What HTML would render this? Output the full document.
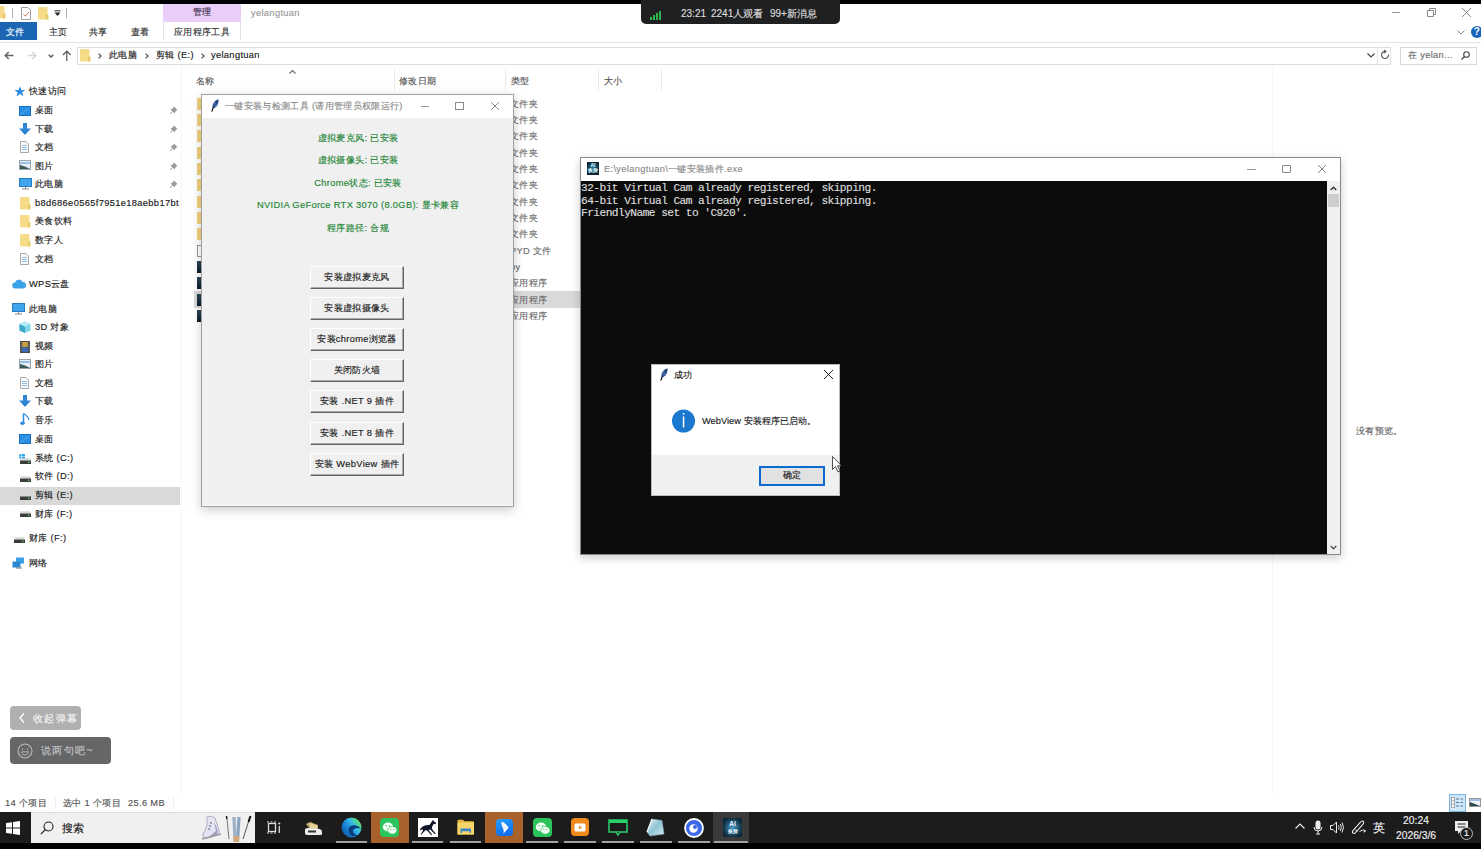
<!DOCTYPE html>
<html><head><meta charset="utf-8">
<style>
*{margin:0;padding:0;box-sizing:border-box}
html,body{width:1481px;height:849px;overflow:hidden;background:#fff;font-family:"Liberation Sans",sans-serif;font-size:9.3px;letter-spacing:0.33px;color:#1a1a1a}
.a{position:absolute}
.t{position:absolute;white-space:nowrap;line-height:12px;-webkit-text-stroke:0.15px currentColor}
svg{position:absolute;overflow:visible}
</style></head><body>

<div class="a" style="left:0px;top:0px;width:1481px;height:4px;background:#000"></div>
<svg style="left:-5px;top:6px" width="11" height="13"><rect x="0" y="0" width="9.5" height="12.5" rx="1" fill="#f6dc88"/><path d="M8 7.5H10.5V12.5H8Z" fill="#e8c868"/></svg>
<div class="a" style="left:12px;top:8px;width:1px;height:10px;background:#b0b0b0"></div>
<svg style="left:21px;top:7px" width="10" height="13"><path d="M0.5 0.5H7L9.5 3V12.5H0.5Z" fill="#fff" stroke="#a0a0a0"/><path d="M2.3 7.2L4.2 9L8 5" fill="none" stroke="#d2704a" stroke-width="1"/></svg>
<svg style="left:38px;top:7px" width="11" height="13"><rect x="0" y="0" width="9.5" height="12.5" rx="1" fill="#f6dc88"/><path d="M8 7.5H10.5V12.5H8Z" fill="#e8c868"/></svg>
<svg style="left:54px;top:10px" width="7" height="7"><path d="M0.5 0.8H6.5" stroke="#222" stroke-width="1"/><path d="M0.5 2.5L3.5 6L6.5 2.5Z" fill="#222"/></svg>
<div class="a" style="left:66px;top:8px;width:1px;height:10px;background:#b0b0b0"></div>
<div class="a" style="left:163px;top:4px;width:78px;height:18px;background:#e8cef8"></div>
<div class="t" style="left:163px;top:6px;color:#3a2a48;width:78px;text-align:center">管理</div>
<div class="t" style="left:251px;top:7px;color:#9a9a9a;">yelangtuan</div>
<div class="a" style="left:1392px;top:12px;width:8px;height:1px;background:#999"></div>
<svg style="left:1427px;top:8px" width="9" height="9"><path d="M0.5 2.5H6.5V8.5H0.5Z M2.5 2.5V0.5H8.5V6.5H6.5" fill="none" stroke="#8a8a8a"/></svg>
<svg style="left:1462px;top:8px" width="9" height="9"><path d="M0 0L9 9M9 0L0 9" stroke="#777" stroke-width="0.9"/></svg>
<div class="a" style="left:0px;top:22px;width:37px;height:18px;background:#1a66b3"></div>
<div class="t" style="left:6px;top:26px;color:#fff;">文件</div>
<div class="t" style="left:49px;top:26px;color:#333;">主页</div>
<div class="t" style="left:89px;top:26px;color:#333;">共享</div>
<div class="t" style="left:131px;top:26px;color:#333;">查看</div>
<div class="a" style="left:163px;top:22px;width:78px;height:18px;border-left:1px solid #e2e2e2;border-right:1px solid #e2e2e2"></div>
<div class="t" style="left:163px;top:26px;color:#333;width:78px;text-align:center">应用程序工具</div>
<svg style="left:1457px;top:30px" width="8" height="5"><path d="M0.5 0.5L4 4L7.5 0.5" fill="none" stroke="#888"/></svg>
<div class="a" style="left:1471px;top:26px;width:12px;height:12px;border-radius:50%;background:#1565b8;color:#fff;font-weight:bold;font-size:10px;line-height:12px;text-align:center">?</div>
<div class="a" style="left:0px;top:42px;width:1481px;height:1px;background:#e3e3e3"></div>
<svg style="left:4px;top:51px" width="10" height="9"><path d="M9.5 4.5H1.5M4.8 1L1.2 4.5L4.8 8" fill="none" stroke="#666" stroke-width="1.5"/></svg>
<svg style="left:27px;top:51px" width="10" height="9"><path d="M0.5 4.5H8.5M5.2 1L8.8 4.5L5.2 8" fill="none" stroke="#d4d4d4" stroke-width="1.4"/></svg>
<svg style="left:48px;top:54px" width="6" height="4"><path d="M0.7 0.7L3 3L5.3 0.7" fill="none" stroke="#555" stroke-width="1.3"/></svg>
<svg style="left:62px;top:50px" width="10" height="11"><path d="M4.8 11V1.5M1 5L4.8 1.2L8.6 5" fill="none" stroke="#555" stroke-width="1.2"/></svg>
<div class="a" style="left:77px;top:47px;width:1314px;height:18px;border:1px solid #dedede"></div>
<div class="a" style="left:1377px;top:47px;width:1px;height:18px;background:#e3e3e3"></div>
<svg style="left:80px;top:49px" width="11" height="13"><rect x="0" y="0" width="9.5" height="12.5" rx="1" fill="#f6dc88"/><path d="M8 7.5H10.5V12.5H8Z" fill="#e8c868"/></svg>
<svg style="left:98px;top:53px" width="4" height="6"><path d="M0.6 0.6L3 3L0.6 5.4" fill="none" stroke="#555" stroke-width="1.3"/></svg>
<div class="t" style="left:109px;top:49px;color:#1a1a1a;">此电脑</div>
<svg style="left:145px;top:53px" width="4" height="6"><path d="M0.6 0.6L3 3L0.6 5.4" fill="none" stroke="#555" stroke-width="1.3"/></svg>
<div class="t" style="left:156px;top:49px;color:#1a1a1a;">剪辑 (E:)</div>
<svg style="left:201px;top:53px" width="4" height="6"><path d="M0.6 0.6L3 3L0.6 5.4" fill="none" stroke="#555" stroke-width="1.3"/></svg>
<div class="t" style="left:211px;top:49px;color:#1a1a1a;">yelangtuan</div>
<svg style="left:1367px;top:53px" width="8" height="5"><path d="M0.5 0.5L4 4L7.5 0.5" fill="none" stroke="#444" stroke-width="1.2"/></svg>
<svg style="left:1381px;top:50px" width="9" height="10"><path d="M7.5 4.5A3.5 3.5 0 1 1 4.5 1.5M3 0L5 1.5L3 3.2" fill="none" stroke="#555" stroke-width="1.1"/></svg>
<div class="a" style="left:1400px;top:47px;width:77px;height:18px;border:1px solid #d9d9d9"></div>
<div class="t" style="left:1408px;top:49px;color:#6d6d6d;">在 yelan...</div>
<svg style="left:1461px;top:51px" width="9" height="10"><circle cx="5.5" cy="3.5" r="2.8" fill="none" stroke="#444" stroke-width="1.1"/><path d="M3.5 5.5L0.5 8.5" stroke="#444" stroke-width="1.3"/></svg>
<svg style="left:14px;top:86px" width="11" height="11"><path d="M6 0.5L7.5 4H11L8.2 6.3L9.3 10.3L6 8L2.5 10.5L3.5 6.5L0.5 4H4.3Z" fill="#2f8be0"/></svg>
<div class="t" style="left:29px;top:85px;color:#1a1a1a;">快速访问</div>
<svg style="left:19px;top:106px" width="12" height="10"><rect x="0.5" y="0.5" width="11" height="9" fill="#2b8fe6" stroke="#1a6cc0"/><path d="M1 9L11 1" stroke="#5ab0f4" stroke-width="0.6"/></svg>
<div class="t" style="left:35px;top:104px;color:#1a1a1a;">桌面</div>
<svg style="left:170px;top:106px" width="8" height="8"><path d="M4 0.5L7.5 4L6.5 4.5L5 6L4.5 7.5L0.5 3.5L2 3L3.5 1.5Z" fill="#9a9a9a"/><path d="M2.5 5.5L0.2 7.8" stroke="#9a9a9a"/></svg>
<svg style="left:19px;top:123px" width="12" height="12"><path d="M4 0H8V5.5H12L6 12L0 5.5H4Z" fill="#2f86d6"/></svg>
<div class="t" style="left:35px;top:122.69999999999999px;color:#1a1a1a;">下载</div>
<svg style="left:170px;top:124.69999999999999px" width="8" height="8"><path d="M4 0.5L7.5 4L6.5 4.5L5 6L4.5 7.5L0.5 3.5L2 3L3.5 1.5Z" fill="#9a9a9a"/><path d="M2.5 5.5L0.2 7.8" stroke="#9a9a9a"/></svg>
<svg style="left:20px;top:141px" width="9" height="12"><path d="M0.5 0.5H6L8.5 3V11.5H0.5Z" fill="#fafafa" stroke="#a8a8a8"/><path d="M2 4.5H7M2 6.5H7M2 8.5H7" stroke="#8cbce8" stroke-width="1"/></svg>
<div class="t" style="left:35px;top:141px;color:#1a1a1a;">文档</div>
<svg style="left:170px;top:143px" width="8" height="8"><path d="M4 0.5L7.5 4L6.5 4.5L5 6L4.5 7.5L0.5 3.5L2 3L3.5 1.5Z" fill="#9a9a9a"/><path d="M2.5 5.5L0.2 7.8" stroke="#9a9a9a"/></svg>
<svg style="left:19px;top:160px" width="12" height="10"><rect x="0.5" y="0.5" width="11" height="9" fill="#e8eef4" stroke="#9aa4ae"/><path d="M1 3H11" stroke="#7fb0e0" stroke-width="1.5"/><path d="M1 9L1 5Q6 6 11 9Z" fill="#3a5a5a"/></svg>
<div class="t" style="left:35px;top:159.6px;color:#1a1a1a;">图片</div>
<svg style="left:170px;top:161.6px" width="8" height="8"><path d="M4 0.5L7.5 4L6.5 4.5L5 6L4.5 7.5L0.5 3.5L2 3L3.5 1.5Z" fill="#9a9a9a"/><path d="M2.5 5.5L0.2 7.8" stroke="#9a9a9a"/></svg>
<svg style="left:19px;top:178px" width="13" height="12"><rect x="0.5" y="0.5" width="12" height="8" fill="#3fa6ee" stroke="#2a7cc0"/><path d="M3 11H10" stroke="#888" stroke-width="1"/><path d="M6.5 9V11" stroke="#888"/></svg>
<div class="t" style="left:35px;top:178px;color:#1a1a1a;">此电脑</div>
<svg style="left:170px;top:180px" width="8" height="8"><path d="M4 0.5L7.5 4L6.5 4.5L5 6L4.5 7.5L0.5 3.5L2 3L3.5 1.5Z" fill="#9a9a9a"/><path d="M2.5 5.5L0.2 7.8" stroke="#9a9a9a"/></svg>
<svg style="left:20px;top:197px" width="11" height="13"><rect x="0" y="0" width="9.5" height="12.5" rx="1" fill="#f6dc88"/><path d="M8 7.5H10.5V12.5H8Z" fill="#e8c868"/></svg>
<div class="t" style="left:35px;top:197px;color:#1a1a1a;letter-spacing:0.35px;width:145px;overflow:hidden">b8d686e0565f7951e18aebb17bt</div>
<svg style="left:20px;top:215px" width="11" height="13"><rect x="0" y="0" width="9.5" height="12.5" rx="1" fill="#f6dc88"/><path d="M8 7.5H10.5V12.5H8Z" fill="#e8c868"/></svg>
<div class="t" style="left:35px;top:215px;color:#1a1a1a;">美食饮料</div>
<svg style="left:20px;top:234px" width="11" height="13"><rect x="0" y="0" width="9.5" height="12.5" rx="1" fill="#f6dc88"/><path d="M8 7.5H10.5V12.5H8Z" fill="#e8c868"/></svg>
<div class="t" style="left:35px;top:234px;color:#1a1a1a;">数字人</div>
<svg style="left:20px;top:253px" width="9" height="12"><path d="M0.5 0.5H6L8.5 3V11.5H0.5Z" fill="#fafafa" stroke="#a8a8a8"/><path d="M2 4.5H7M2 6.5H7M2 8.5H7" stroke="#8cbce8" stroke-width="1"/></svg>
<div class="t" style="left:35px;top:253px;color:#1a1a1a;">文档</div>
<svg style="left:12px;top:279px" width="14" height="10"><path d="M3.5 9.5A3 3 0 0 1 3 3.5A4 4 0 0 1 10.5 3A3 3 0 0 1 11 9.5Z" fill="#3aa0e8"/></svg>
<div class="t" style="left:29px;top:278px;color:#1a1a1a;">WPS云盘</div>
<svg style="left:12px;top:303px" width="13" height="12"><rect x="0.5" y="0.5" width="12" height="8" fill="#3fa6ee" stroke="#2a7cc0"/><path d="M3 11H10" stroke="#888" stroke-width="1"/><path d="M6.5 9V11" stroke="#888"/></svg>
<div class="t" style="left:29px;top:303px;color:#1a1a1a;">此电脑</div>
<svg style="left:19px;top:321px" width="12" height="12"><path d="M6 0.5L11.5 3V9.5L6 12L0.5 9.5V3Z" fill="#7fd4e8"/><path d="M6 5.5V12L0.5 9.5V3Z" fill="#3aa8c8"/><path d="M6 5.5L11.5 3L6 0.5L0.5 3Z" fill="#b8ecf8"/></svg>
<div class="t" style="left:35px;top:321px;color:#1a1a1a;">3D 对象</div>
<svg style="left:20px;top:341px" width="10" height="12"><rect x="0" y="0" width="10" height="12" fill="#4a4a4a"/><path d="M1 1V11M9 1V11" stroke="#999" stroke-width="0.8" stroke-dasharray="1 1"/><rect x="2.2" y="1" width="5.6" height="5" fill="#c8a040"/><rect x="2.2" y="6.3" width="5.6" height="4.7" fill="#3a6ab8"/></svg>
<div class="t" style="left:35px;top:340px;color:#1a1a1a;">视频</div>
<svg style="left:19px;top:359px" width="12" height="10"><rect x="0.5" y="0.5" width="11" height="9" fill="#e8eef4" stroke="#9aa4ae"/><path d="M1 3H11" stroke="#7fb0e0" stroke-width="1.5"/><path d="M1 9L1 5Q6 6 11 9Z" fill="#3a5a5a"/></svg>
<div class="t" style="left:35px;top:358px;color:#1a1a1a;">图片</div>
<svg style="left:20px;top:377px" width="9" height="12"><path d="M0.5 0.5H6L8.5 3V11.5H0.5Z" fill="#fafafa" stroke="#a8a8a8"/><path d="M2 4.5H7M2 6.5H7M2 8.5H7" stroke="#8cbce8" stroke-width="1"/></svg>
<div class="t" style="left:35px;top:377px;color:#1a1a1a;">文档</div>
<svg style="left:19px;top:395px" width="12" height="12"><path d="M4 0H8V5.5H12L6 12L0 5.5H4Z" fill="#2f86d6"/></svg>
<div class="t" style="left:35px;top:395px;color:#1a1a1a;">下载</div>
<svg style="left:20px;top:413px" width="10" height="13"><path d="M3.5 0.5V10" stroke="#2f8be0" stroke-width="1.5"/><ellipse cx="2.5" cy="10.2" rx="2.3" ry="1.8" fill="#2f8be0"/><path d="M3.5 0.5Q8 3 9 7" fill="none" stroke="#2f8be0" stroke-width="1.2"/></svg>
<div class="t" style="left:35px;top:414px;color:#1a1a1a;">音乐</div>
<svg style="left:19px;top:434px" width="12" height="10"><rect x="0.5" y="0.5" width="11" height="9" fill="#2b8fe6" stroke="#1a6cc0"/><path d="M1 9L11 1" stroke="#5ab0f4" stroke-width="0.6"/></svg>
<div class="t" style="left:35px;top:433px;color:#1a1a1a;">桌面</div>
<div class="a" style="left:0px;top:487px;width:180px;height:18px;background:#d9d9d9"></div>
<svg style="left:19px;top:454px" width="6" height="5"><path d="M0 0.5L2.5 0.2V2.2H0ZM3 0.1L6 0V2.2H3ZM0 2.7H2.5V4.6L0 4.3ZM3 2.7H6V5L3 4.7Z" fill="#2aa8f0"/></svg>
<svg style="left:20px;top:458px" width="11" height="6"><path d="M1 0.3H10L11 2.5H0Z" fill="#d8d8d8"/><rect x="0" y="2.5" width="11" height="3.5" fill="#3c3c3c"/><rect x="8" y="3.6" width="1.5" height="1.3" fill="#5ad25a"/></svg>
<div class="t" style="left:35px;top:452px;color:#1a1a1a;">系统 (C:)</div>
<svg style="left:20px;top:476px" width="11" height="6"><path d="M1 0.3H10L11 2.5H0Z" fill="#d8d8d8"/><rect x="0" y="2.5" width="11" height="3.5" fill="#3c3c3c"/><rect x="8" y="3.6" width="1.5" height="1.3" fill="#5ad25a"/></svg>
<div class="t" style="left:35px;top:470px;color:#1a1a1a;">软件 (D:)</div>
<svg style="left:20px;top:494px" width="11" height="6"><path d="M1 0.3H10L11 2.5H0Z" fill="#d8d8d8"/><rect x="0" y="2.5" width="11" height="3.5" fill="#3c3c3c"/><rect x="8" y="3.6" width="1.5" height="1.3" fill="#5ad25a"/></svg>
<div class="t" style="left:35px;top:489px;color:#1a1a1a;">剪辑 (E:)</div>
<svg style="left:20px;top:511px" width="11" height="6"><path d="M1 0.3H10L11 2.5H0Z" fill="#d8d8d8"/><rect x="0" y="2.5" width="11" height="3.5" fill="#3c3c3c"/><rect x="8" y="3.6" width="1.5" height="1.3" fill="#5ad25a"/></svg>
<div class="t" style="left:35px;top:508px;color:#1a1a1a;">财库 (F:)</div>
<svg style="left:14px;top:537px" width="11" height="6"><path d="M1 0.3H10L11 2.5H0Z" fill="#d8d8d8"/><rect x="0" y="2.5" width="11" height="3.5" fill="#3c3c3c"/><rect x="8" y="3.6" width="1.5" height="1.3" fill="#5ad25a"/></svg>
<div class="t" style="left:29px;top:532px;color:#1a1a1a;">财库 (F:)</div>
<svg style="left:12px;top:557px" width="13" height="12"><rect x="4" y="0.5" width="8" height="6" fill="#3aa0e8"/><rect x="0.5" y="4.5" width="8" height="6" fill="#2a88d0"/><path d="M4 11H10" stroke="#777"/></svg>
<div class="t" style="left:29px;top:557px;color:#1a1a1a;">网络</div>
<div class="a" style="left:181px;top:66px;width:1px;height:728px;background:#f5f5f5"></div>
<div class="a" style="left:1272px;top:66px;width:1px;height:728px;background:#f8f8f8"></div>
<div class="t" style="left:196px;top:75px;color:#555;">名称</div>
<svg style="left:289px;top:70px" width="7" height="4"><path d="M0.5 3.5L3.5 0.5L6.5 3.5" fill="none" stroke="#666" stroke-width="1.1"/></svg>
<div class="a" style="left:394px;top:70px;width:1px;height:20px;background:#e8e8e8"></div>
<div class="a" style="left:505px;top:70px;width:1px;height:20px;background:#e8e8e8"></div>
<div class="a" style="left:598px;top:70px;width:1px;height:20px;background:#e8e8e8"></div>
<div class="a" style="left:661px;top:70px;width:1px;height:20px;background:#e8e8e8"></div>
<div class="t" style="left:399px;top:75px;color:#555;">修改日期</div>
<div class="t" style="left:511px;top:75px;color:#555;">类型</div>
<div class="t" style="left:604px;top:75px;color:#555;">大小</div>
<div class="a" style="left:194px;top:291px;width:386px;height:17px;background:#d9d9d9"></div>
<div class="a" style="left:197px;top:98px;width:5px;height:12px;background:#f2d27a"></div>
<div class="t" style="left:510px;top:98px;color:#6d6d6d;">文件夹</div>
<div class="a" style="left:197px;top:114px;width:5px;height:12px;background:#f2d27a"></div>
<div class="t" style="left:510px;top:114px;color:#6d6d6d;">文件夹</div>
<div class="a" style="left:197px;top:130px;width:5px;height:12px;background:#f2d27a"></div>
<div class="t" style="left:510px;top:130px;color:#6d6d6d;">文件夹</div>
<div class="a" style="left:197px;top:147px;width:5px;height:12px;background:#f2d27a"></div>
<div class="t" style="left:510px;top:147px;color:#6d6d6d;">文件夹</div>
<div class="a" style="left:197px;top:163px;width:5px;height:12px;background:#f2d27a"></div>
<div class="t" style="left:510px;top:163px;color:#6d6d6d;">文件夹</div>
<div class="a" style="left:197px;top:179px;width:5px;height:12px;background:#f2d27a"></div>
<div class="t" style="left:510px;top:179px;color:#6d6d6d;">文件夹</div>
<div class="a" style="left:197px;top:196px;width:5px;height:12px;background:#f2d27a"></div>
<div class="t" style="left:510px;top:196px;color:#6d6d6d;">文件夹</div>
<div class="a" style="left:197px;top:212px;width:5px;height:12px;background:#f2d27a"></div>
<div class="t" style="left:510px;top:212px;color:#6d6d6d;">文件夹</div>
<div class="a" style="left:197px;top:228px;width:5px;height:12px;background:#f2d27a"></div>
<div class="t" style="left:510px;top:228px;color:#6d6d6d;">文件夹</div>
<div class="a" style="left:197px;top:245px;width:5px;height:12px;background:#fff;border:1px solid #999"></div>
<div class="t" style="left:510px;top:245px;color:#6d6d6d;">PYD 文件</div>
<div class="a" style="left:197px;top:261px;width:5px;height:12px;background:linear-gradient(#2a4a5a,#0e1a24)"></div>
<div class="t" style="left:510px;top:261px;color:#6d6d6d;">py</div>
<div class="a" style="left:197px;top:277px;width:5px;height:12px;background:linear-gradient(#2a4a5a,#0e1a24)"></div>
<div class="t" style="left:510px;top:277px;color:#6d6d6d;">应用程序</div>
<div class="a" style="left:197px;top:294px;width:5px;height:12px;background:linear-gradient(#2a4a5a,#0e1a24)"></div>
<div class="t" style="left:510px;top:294px;color:#6d6d6d;">应用程序</div>
<div class="a" style="left:197px;top:310px;width:5px;height:12px;background:linear-gradient(#2a4a5a,#0e1a24)"></div>
<div class="t" style="left:510px;top:310px;color:#6d6d6d;">应用程序</div>
<div class="t" style="left:1356px;top:425px;color:#666;">没有预览。</div>
<div class="t" style="left:5px;top:797px;color:#555;">14 个项目</div>
<div class="a" style="left:55px;top:797px;width:1px;height:12px;background:#eee"></div>
<div class="t" style="left:63px;top:797px;color:#555;">选中 1 个项目</div>
<div class="t" style="left:128px;top:797px;color:#555;">25.6 MB</div>
<div class="a" style="left:173px;top:797px;width:1px;height:12px;background:#eee"></div>
<div class="a" style="left:1449px;top:794px;width:17px;height:18px;background:#cce8ff;border:1px solid #7fb4d8"></div>
<svg style="left:1451px;top:797px" width="13" height="11"><rect x="0.5" y="0.5" width="3" height="10" fill="#fff" stroke="#888" stroke-width="0.7"/><path d="M0.5 3.8H3.5M0.5 7.2H3.5" stroke="#888" stroke-width="0.7"/><path d="M5 2H8M9.5 2H12M5 5.5H8M9.5 5.5H12M5 9H8M9.5 9H12" stroke="#6a7480" stroke-width="1.2"/></svg>
<svg style="left:1469px;top:798px" width="12" height="9"><rect x="0.5" y="0.5" width="11" height="8" fill="#eef4fa" stroke="#999"/><path d="M1 2H11" stroke="#5a8ad0"/><path d="M1 8V4Q6 6 11 8Z" fill="#2a4a4a"/></svg>
<div class="a" style="left:201px;top:94px;width:313px;height:413px;background:#f0f0f0;border:1px solid #a0a0a0;box-shadow:inset 0 -1px 0 #fff,0 3px 10px rgba(0,0,0,0.2)"></div>
<div class="a" style="left:202px;top:95px;width:311px;height:23px;background:#fff"></div>
<svg style="left:211px;top:99px" width="8" height="13"><path d="M7.5 0.3C4 1 1.3 4.5 1.3 8.6L2.4 9.6C5.8 8.2 8 4.6 7.5 0.3Z" fill="#34589a"/><path d="M6.8 1.2L2 9" stroke="#0c1a3a" stroke-width="0.7"/><path d="M3 5L5 4.5M2.5 7L5.5 6.2" stroke="#8ab0e8" stroke-width="0.5"/><path d="M2 9L0.8 12.6" stroke="#000" stroke-width="1.1"/></svg>
<div class="t" style="left:225px;top:100px;color:#8c8c8c;">一键安装与检测工具 (请用管理员权限运行)</div>
<div class="a" style="left:421px;top:106px;width:8px;height:1px;background:#999"></div>
<div class="a" style="left:455px;top:102px;width:9px;height:8px;border:1px solid #8a8a8a"></div>
<svg style="left:491px;top:102px" width="8" height="8"><path d="M0 0L8 8M8 0L0 8" stroke="#808080" stroke-width="0.9"/></svg>
<div class="t" style="left:202px;top:132px;color:#228534;width:311px;text-align:center;padding-left:1px">虚拟麦克风: 已安装</div>
<div class="t" style="left:202px;top:154px;color:#228534;width:311px;text-align:center;padding-left:1px">虚拟摄像头: 已安装</div>
<div class="t" style="left:202px;top:177px;color:#228534;width:311px;text-align:center;padding-left:1px">Chrome状态: 已安装</div>
<div class="t" style="left:202px;top:199px;color:#228534;width:311px;text-align:center;padding-left:1px">NVIDIA GeForce RTX 3070 (8.0GB): 显卡兼容</div>
<div class="t" style="left:202px;top:222px;color:#228534;width:311px;text-align:center;padding-left:1px">程序路径: 合规</div>
<div class="a" style="left:310px;top:266px;width:94px;height:23px;background:#f0f0f0;border-top:1px solid #fff;border-left:1px solid #fff;border-right:1px solid #646464;border-bottom:1px solid #646464;box-shadow:inset -1px -1px 0 #a8a8a8"></div>
<div class="t" style="left:310px;top:271px;color:#1a1a1a;width:94px;text-align:center">安装虚拟麦克风</div>
<div class="a" style="left:310px;top:297px;width:94px;height:23px;background:#f0f0f0;border-top:1px solid #fff;border-left:1px solid #fff;border-right:1px solid #646464;border-bottom:1px solid #646464;box-shadow:inset -1px -1px 0 #a8a8a8"></div>
<div class="t" style="left:310px;top:302px;color:#1a1a1a;width:94px;text-align:center">安装虚拟摄像头</div>
<div class="a" style="left:310px;top:328px;width:94px;height:23px;background:#f0f0f0;border-top:1px solid #fff;border-left:1px solid #fff;border-right:1px solid #646464;border-bottom:1px solid #646464;box-shadow:inset -1px -1px 0 #a8a8a8"></div>
<div class="t" style="left:310px;top:333px;color:#1a1a1a;width:94px;text-align:center">安装chrome浏览器</div>
<div class="a" style="left:310px;top:359px;width:94px;height:23px;background:#f0f0f0;border-top:1px solid #fff;border-left:1px solid #fff;border-right:1px solid #646464;border-bottom:1px solid #646464;box-shadow:inset -1px -1px 0 #a8a8a8"></div>
<div class="t" style="left:310px;top:364px;color:#1a1a1a;width:94px;text-align:center">关闭防火墙</div>
<div class="a" style="left:310px;top:390px;width:94px;height:23px;background:#f0f0f0;border-top:1px solid #fff;border-left:1px solid #fff;border-right:1px solid #646464;border-bottom:1px solid #646464;box-shadow:inset -1px -1px 0 #a8a8a8"></div>
<div class="t" style="left:310px;top:395px;color:#1a1a1a;width:94px;text-align:center">安装 .NET 9 插件</div>
<div class="a" style="left:310px;top:422px;width:94px;height:23px;background:#f0f0f0;border-top:1px solid #fff;border-left:1px solid #fff;border-right:1px solid #646464;border-bottom:1px solid #646464;box-shadow:inset -1px -1px 0 #a8a8a8"></div>
<div class="t" style="left:310px;top:427px;color:#1a1a1a;width:94px;text-align:center">安装 .NET 8 插件</div>
<div class="a" style="left:310px;top:453px;width:94px;height:23px;background:#f0f0f0;border-top:1px solid #fff;border-left:1px solid #fff;border-right:1px solid #646464;border-bottom:1px solid #646464;box-shadow:inset -1px -1px 0 #a8a8a8"></div>
<div class="t" style="left:310px;top:458px;color:#1a1a1a;width:94px;text-align:center">安装 WebView 插件</div>
<div class="a" style="left:580px;top:157px;width:761px;height:398px;background:#fff;border:1px solid #8a8a8a;box-shadow:0 3px 9px rgba(0,0,0,0.2)"></div>
<div class="a" style="left:587px;top:162px;width:12px;height:13px;background:radial-gradient(circle at 50% 45%,#2a7aa0,#0a2030 75%)"></div>
<div class="t" style="left:587px;top:163px;width:12px;text-align:center;color:#dff;font-size:5px;font-weight:bold;line-height:5px;letter-spacing:0;-webkit-text-stroke:0">AI<br>换脸</div>
<div class="t" style="left:604px;top:163px;color:#8c8c8c;">E:\yelangtuan\一键安装插件.exe</div>
<div class="a" style="left:1247px;top:169px;width:9px;height:1px;background:#999"></div>
<div class="a" style="left:1282px;top:165px;width:9px;height:8px;border:1px solid #888;border-radius:1px"></div>
<svg style="left:1318px;top:165px" width="8" height="8"><path d="M0 0L8 8M8 0L0 8" stroke="#777" stroke-width="0.9"/></svg>
<div class="a" style="left:581px;top:181px;width:746px;height:373px;background:#0c0c0c"></div>
<div class="a" style="left:1327px;top:181px;width:13px;height:373px;background:#f0f0f0"></div>
<div class="a" style="left:1328px;top:194px;width:11px;height:13px;background:#cdcdcd"></div>
<svg style="left:1330px;top:186px" width="7" height="5"><path d="M0.7 4L3.5 1.2L6.3 4" fill="none" stroke="#333" stroke-width="1.4"/></svg>
<svg style="left:1330px;top:545px" width="7" height="5"><path d="M0.7 1L3.5 3.8L6.3 1" fill="none" stroke="#555" stroke-width="1.4"/></svg>
<div class="t" style="left:581px;top:182.0px;color:#dedede;font-family:'Liberation Mono',monospace;font-size:11.2px;line-height:12.5px;letter-spacing:-0.55px">32-bit Virtual Cam already registered, skipping.</div>
<div class="t" style="left:581px;top:194.5px;color:#dedede;font-family:'Liberation Mono',monospace;font-size:11.2px;line-height:12.5px;letter-spacing:-0.55px">64-bit Virtual Cam already registered, skipping.</div>
<div class="t" style="left:581px;top:207.0px;color:#dedede;font-family:'Liberation Mono',monospace;font-size:11.2px;line-height:12.5px;letter-spacing:-0.55px">FriendlyName set to 'C920'.</div>
<div class="a" style="left:651px;top:364px;width:189px;height:132px;background:#fff;border:1px solid #bbb"></div>
<div class="a" style="left:652px;top:455px;width:187px;height:40px;background:#f0f0f0"></div>
<svg style="left:660px;top:368px" width="8" height="13"><path d="M7.5 0.3C4 1 1.3 4.5 1.3 8.6L2.4 9.6C5.8 8.2 8 4.6 7.5 0.3Z" fill="#34589a"/><path d="M6.8 1.2L2 9" stroke="#0c1a3a" stroke-width="0.7"/><path d="M3 5L5 4.5M2.5 7L5.5 6.2" stroke="#8ab0e8" stroke-width="0.5"/><path d="M2 9L0.8 12.6" stroke="#000" stroke-width="1.1"/></svg>
<div class="t" style="left:674px;top:369px;color:#1a1a1a;">成功</div>
<svg style="left:824px;top:370px" width="9" height="9"><path d="M0 0L9 9M9 0L0 9" stroke="#222" stroke-width="1"/></svg>
<svg style="left:672px;top:409px" width="24" height="24"><circle cx="11.5" cy="12" r="11.5" fill="#1a78cf"/><rect x="10.8" y="4" width="1.5" height="1.6" fill="#fff"/><rect x="10.8" y="7.5" width="1.5" height="11" fill="#fff"/></svg>
<div class="t" style="left:702px;top:415px;color:#1a1a1a;letter-spacing:0">WebView 安装程序已启动。</div>
<div class="a" style="left:759px;top:466px;width:66px;height:20px;background:#e1e1e1;border:2px solid #0a6ccc"></div>
<div class="t" style="left:759px;top:469px;color:#1a1a1a;width:66px;text-align:center">确定</div>
<svg style="left:832px;top:456px" width="10" height="17"><path d="M0.5 0.5V13.5L3.5 10.5L6 16L8 15L5.5 9.8H9.5Z" fill="#fff" stroke="#222" stroke-width="0.8"/></svg>
<div class="a" style="left:0px;top:812px;width:1481px;height:31px;background:#1c1c1c"></div>
<div class="a" style="left:0px;top:843px;width:1481px;height:6px;background:#000"></div>
<svg style="left:6px;top:821px" width="14" height="14"><path d="M0 2L6 1.2V6.5H0ZM7 1L14 0V6.5H7ZM0 7.5H6V12.8L0 12ZM7 7.5H14V14L7 13Z" fill="#fff"/></svg>
<div class="a" style="left:31px;top:812px;width:224px;height:31px;background:#f0f0f0;border-top:1px solid #ddd"></div>
<svg style="left:40px;top:821px" width="14" height="14"><circle cx="8.5" cy="5.5" r="4.5" fill="none" stroke="#222" stroke-width="1.1"/><path d="M5.3 8.7L0.8 13.2" stroke="#222" stroke-width="1.2"/></svg>
<div class="t" style="left:62px;top:822px;color:#1a1a1a;font-size:10.5px;">搜索</div>
<svg style="left:200px;top:815px" width="54" height="28"><path d="M7 2Q12 0 15 3L18 12Q20 16 19 19L8 23L3 22Q2 19 5 16L7 9Z" fill="#e4e4f2" stroke="#8a8aa8" stroke-width="0.6"/><path d="M14 6L17 14Q18 18 17 19L9 22L16 16Z" fill="#9a9ab8"/><circle cx="11" cy="8" r="0.8" fill="#445"/><circle cx="10" cy="11" r="0.8" fill="#445"/><circle cx="9" cy="14" r="0.8" fill="#445"/><path d="M2 24L21 19" stroke="#999" stroke-width="1.4"/><path d="M26.5 1L29 24" stroke="#222" stroke-width="1.6" stroke-dasharray="3 22"/><path d="M27 4L29 24" stroke="#555" stroke-width="0.8"/><path d="M34 2L35 27" stroke="#9ab0c8" stroke-width="3.2"/><path d="M39 2L37.5 27" stroke="#8aa4c0" stroke-width="3.2"/><path d="M35 21L35.3 27M37.8 21L37.5 27" stroke="#d8a878" stroke-width="3"/><path d="M50 2L43 24" stroke="#444" stroke-width="0.9"/><path d="M50.5 1L48.5 7" stroke="#111" stroke-width="2"/></svg>
<svg style="left:267px;top:821px" width="14" height="13"><rect x="1.5" y="2.5" width="7" height="8" fill="none" stroke="#ddd" stroke-width="1.3"/><path d="M0 1H10M0 12H10" stroke="#ddd" stroke-width="1.2" stroke-dasharray="2 1.5"/><circle cx="12.3" cy="2.5" r="1.1" fill="#ddd"/><path d="M12.3 5V12" stroke="#ddd" stroke-width="1.3"/></svg>
<svg style="left:305px;top:821px" width="18" height="15"><path d="M1 3L5 1L13 4L13 9L5 8Z" fill="#c8b070"/><path d="M5 2L12 4.5L12 8L5 7Z" fill="#e4d49a"/><path d="M0 9Q0 7 3 7L15 8Q17 9 17 11V13Q17 14 15 14H3Q0 14 0 12Z" fill="#eee"/><rect x="3" y="9.5" width="8" height="2" fill="#333"/></svg>
<svg style="left:341px;top:817px" width="21" height="21"><defs><linearGradient id="eg" x1="0" y1="0.9" x2="1" y2="0.2"><stop offset="0" stop-color="#0b4e9e"/><stop offset=".4" stop-color="#1a86d6"/><stop offset=".65" stop-color="#35bde8"/><stop offset=".85" stop-color="#4fd88a"/><stop offset="1" stop-color="#6ae05a"/></linearGradient></defs><circle cx="10.5" cy="10.5" r="10" fill="url(#eg)"/><path d="M7.5 12.5Q8 8.5 12.5 8.2Q17.5 8.2 20.3 12Q18 10.8 15 11.2Q11.8 11.8 12 14.5Q12.5 17.5 17 18.2Q12 20.8 9 17.5Q7.2 15.5 7.5 12.5Z" fill="#0c3c7c"/></svg>
<div class="a" style="left:371px;top:812px;width:38px;height:31px;background:#a8612a"></div>
<div class="a" style="left:380px;top:818px;width:19px;height:19px;background:#2bc35c;border-radius:4px"></div>
<svg style="left:382px;top:822px" width="15" height="13"><ellipse cx="6" cy="5" rx="5.3" ry="4.4" fill="#f4fff6"/><ellipse cx="10.3" cy="8.3" rx="4.6" ry="3.9" fill="#f4fff6" stroke="#2bc35c" stroke-width="0.7"/><circle cx="4.2" cy="3.8" r="0.7" fill="#2bc35c"/><circle cx="7.6" cy="3.8" r="0.7" fill="#2bc35c"/><circle cx="8.8" cy="7.5" r="0.6" fill="#2bc35c"/><circle cx="11.8" cy="7.5" r="0.6" fill="#2bc35c"/></svg>
<div class="a" style="left:418px;top:818px;width:20px;height:19px;background:#fff"></div>
<svg style="left:419px;top:819px" width="18" height="17"><path d="M14 1L15 2.2L17.2 4.2L16.5 5.2L14.8 4.8L13.2 7.5L12.8 9.5L14.5 12L16.8 14.6L16 15.2L13.2 12.6L11.2 10.6L9.5 11L13.2 15.8L12.4 16.2L8 11.5L6.5 11.3L4.5 13.2L2.2 15.8L1.6 15.2L3.6 12.2L4.2 10.5Q2.5 10.5 0.6 11.6Q1.5 8.5 4.2 7.2Q7 5.8 10.6 6L12.6 2.8Z" fill="#0e1428"/></svg>
<svg style="left:457px;top:819px" width="18" height="17"><path d="M0.5 1.5Q0.5 0.8 1.2 0.8H6L7.5 2.2H16Q17 2.2 17 3V15.5H0.5Z" fill="#e8b83a"/><rect x="0.5" y="3.5" width="16.5" height="12" rx="0.8" fill="#f8d66a"/><path d="M3.5 9.5H14V14H12.5V12.5H5V14H3.5Z" fill="#3a86c8"/><rect x="5" y="12.5" width="7.5" height="2" fill="#f8d66a"/></svg>
<div class="a" style="left:485px;top:812px;width:38px;height:31px;background:#a8612a"></div>
<div class="a" style="left:496px;top:819px;width:17px;height:17px;background:linear-gradient(160deg,#22a0ff,#1064e8);border-radius:4px"></div>
<svg style="left:499px;top:821px" width="11" height="13"><path d="M2.5 0.5Q8 3 9.5 7Q7.5 9 4.5 12.5Q5 9 4 7.5Q2 4.5 2.5 0.5Z" fill="#fff"/><path d="M3.5 3.5L7 6.5M3.8 6L6.8 8" stroke="#9ccaff" stroke-width="0.5"/></svg>
<div class="a" style="left:533px;top:818px;width:19px;height:19px;background:#2bc35c;border-radius:4px"></div>
<svg style="left:535px;top:822px" width="15" height="13"><ellipse cx="6" cy="5" rx="5.3" ry="4.4" fill="#f4fff6"/><ellipse cx="10.3" cy="8.3" rx="4.6" ry="3.9" fill="#f4fff6" stroke="#2bc35c" stroke-width="0.7"/><circle cx="4.2" cy="3.8" r="0.7" fill="#2bc35c"/><circle cx="7.6" cy="3.8" r="0.7" fill="#2bc35c"/><circle cx="8.8" cy="7.5" r="0.6" fill="#2bc35c"/><circle cx="11.8" cy="7.5" r="0.6" fill="#2bc35c"/></svg>
<div class="a" style="left:571px;top:818px;width:18px;height:18px;background:#f08a1c;border-radius:4px"></div>
<svg style="left:574px;top:822px" width="12" height="10"><rect x="0.5" y="1.5" width="11" height="8" rx="1.5" fill="#fff"/><path d="M5 3.5L8 5.5L5 7.5Z" fill="#f08a1c"/></svg>
<svg style="left:608px;top:819px" width="20" height="17"><rect x="1" y="1" width="18" height="12" fill="none" stroke="#2ad068" stroke-width="1.5"/><rect x="1" y="1" width="18" height="3" fill="#2ad068"/><path d="M8 13L10 16L12 13" fill="#1c1c1c" stroke="#2ad068" stroke-width="1.4"/></svg>
<svg style="left:646px;top:818px" width="19" height="19"><defs><linearGradient id="np" x1="0" y1="0" x2="1" y2="1"><stop offset="0" stop-color="#e8f6fa"/><stop offset=".5" stop-color="#8ec4d4"/><stop offset="1" stop-color="#d8eef4"/></linearGradient></defs><path d="M6 1L16 2.5L18 16L4 18L1 14Z" fill="url(#np)" stroke="#7aa8b8" stroke-width="0.6"/><path d="M6 1L1 14" stroke="#f4fbfd" stroke-width="1.2"/></svg>
<svg style="left:684px;top:818px" width="20" height="20"><circle cx="10" cy="10" r="9" fill="#3a68e8" stroke="#fff" stroke-width="1.8"/><circle cx="9.5" cy="10.5" r="4.2" fill="#fff"/><circle cx="11" cy="9" r="2" fill="#3a68e8"/></svg>
<div class="a" style="left:713px;top:812px;width:36px;height:31px;background:#3a3a3a"></div>
<div class="a" style="left:723px;top:818px;width:19px;height:19px;background:radial-gradient(circle,#4a9ac8,#0a2a3c 75%)"></div>
<div class="t" style="left:723px;top:820px;width:19px;text-align:center;color:#e8f4ff;font-size:6.5px;font-weight:bold;line-height:7px;letter-spacing:0;-webkit-text-stroke:0">AI<br><span style="font-size:4.5px">换脸</span></div>
<div class="a" style="left:336px;top:841px;width:31px;height:2px;background:#a0a0a0"></div>
<div class="a" style="left:412px;top:841px;width:31px;height:2px;background:#a0a0a0"></div>
<div class="a" style="left:450px;top:841px;width:31px;height:2px;background:#a0a0a0"></div>
<div class="a" style="left:526px;top:841px;width:32px;height:2px;background:#a0a0a0"></div>
<div class="a" style="left:564px;top:841px;width:32px;height:2px;background:#a0a0a0"></div>
<div class="a" style="left:602px;top:841px;width:32px;height:2px;background:#a0a0a0"></div>
<div class="a" style="left:640px;top:841px;width:32px;height:2px;background:#a0a0a0"></div>
<div class="a" style="left:678px;top:841px;width:32px;height:2px;background:#a0a0a0"></div>
<div class="a" style="left:714px;top:841px;width:34px;height:2px;background:#a0a0a0"></div>
<svg style="left:1295px;top:823px" width="10" height="6"><path d="M0.5 5.5L5 1L9.5 5.5" fill="none" stroke="#eee" stroke-width="1.1"/></svg>
<svg style="left:1313px;top:820px" width="10" height="15"><rect x="2.5" y="0.5" width="5" height="9" rx="2.5" fill="#eee"/><path d="M1 7Q1 11 5 11Q9 11 9 7M5 11V14M3 14H7" fill="none" stroke="#eee"/></svg>
<svg style="left:1330px;top:821px" width="14" height="13"><path d="M0.5 4.5H3L6.5 1V12L3 8.5H0.5Z" fill="none" stroke="#eee"/><path d="M8.5 4.5Q9.8 6.5 8.5 8.5M10.3 3Q12.5 6.5 10.3 10M12 1.5Q15 6.5 12 11.5" fill="none" stroke="#eee"/></svg>
<svg style="left:1351px;top:820px" width="16" height="15"><path d="M3 13.5Q0.5 13 2 10.5L9.5 2.2Q11.8 0 12.6 1.8Q13.2 3.2 11.2 5.2L5 12Q4 13.4 3 13.5Z" fill="none" stroke="#eee" stroke-width="1.1"/><path d="M8.5 11.5Q12 9 14.5 10.5Q15 11.8 12.5 12" fill="none" stroke="#eee" stroke-width="1"/><path d="M4 9.5L6.5 11.5" stroke="#eee" stroke-width="0.8"/></svg>
<div class="t" style="left:1373px;top:822px;color:#f0f0f0;font-size:12px;">英</div>
<div class="t" style="left:1398px;top:815px;color:#f0f0f0;font-size:10.3px;width:36px;text-align:center;letter-spacing:0">20:24</div>
<div class="t" style="left:1392px;top:830px;color:#f0f0f0;font-size:10.3px;width:48px;text-align:center;letter-spacing:0">2026/3/6</div>
<svg style="left:1454px;top:820px" width="22" height="21"><path d="M1 1H14V11H7L4 14V11H1Z" fill="#eee"/><path d="M3.5 4H11.5M3.5 7H11.5" stroke="#1c1c1c" stroke-width="1.1"/><circle cx="12.5" cy="13.5" r="6" fill="#1c1c1c" stroke="#ccc" stroke-width="0.9"/></svg>
<div class="t" style="left:1461px;top:827px;width:11px;text-align:center;color:#f0f0f0;font-size:9.5px;line-height:12px;letter-spacing:0">1</div>
<div class="a" style="left:641px;top:0;width:199px;height:24px;background:#1f2022;border-radius:0 0 5px 5px"></div>
<svg style="left:650px;top:11px" width="11" height="9"><rect x="0" y="6" width="2" height="3" fill="#2fb84a"/><rect x="3" y="4" width="2" height="5" fill="#2fb84a"/><rect x="6" y="2" width="2" height="7" fill="#2fb84a"/><rect x="9" y="0" width="2" height="9" fill="#2fb84a"/></svg>
<div class="t" style="left:681px;top:8px;color:#dcdcdc;font-size:10px;letter-spacing:0">23:21</div>
<div class="t" style="left:711px;top:8px;color:#dcdcdc;font-size:10px;letter-spacing:0">2241人观看</div>
<div class="t" style="left:770px;top:8px;color:#dcdcdc;font-size:10px;letter-spacing:0">99+新消息</div>
<div class="a" style="left:10px;top:706px;width:71px;height:24px;background:#b0b0b0;border-radius:4px"></div>
<svg style="left:19px;top:713px" width="6" height="10"><path d="M5 0.5L1 5L5 9.5" fill="none" stroke="#fff" stroke-width="1.3"/></svg>
<div class="t" style="left:33px;top:713px;color:#f4f4f4;font-size:10px;letter-spacing:1.4px">收起弹幕</div>
<div class="a" style="left:10px;top:737px;width:101px;height:27px;background:#656667;border-radius:4px"></div>
<svg style="left:17px;top:743px" width="16" height="16"><circle cx="8" cy="8" r="7" fill="none" stroke="#bbb" stroke-width="1.1"/><path d="M5.5 5.5V7M10.5 5.5V7" stroke="#bbb" stroke-width="1"/><path d="M4.5 8.8H11.5Q10.8 12.2 8 12.2Q5.2 12.2 4.5 8.8Z" fill="none" stroke="#bbb" stroke-width="0.9"/></svg>
<div class="t" style="left:41px;top:745px;color:#c4c4c4;font-size:10px;letter-spacing:1.4px">说两句吧~</div>
</body></html>
